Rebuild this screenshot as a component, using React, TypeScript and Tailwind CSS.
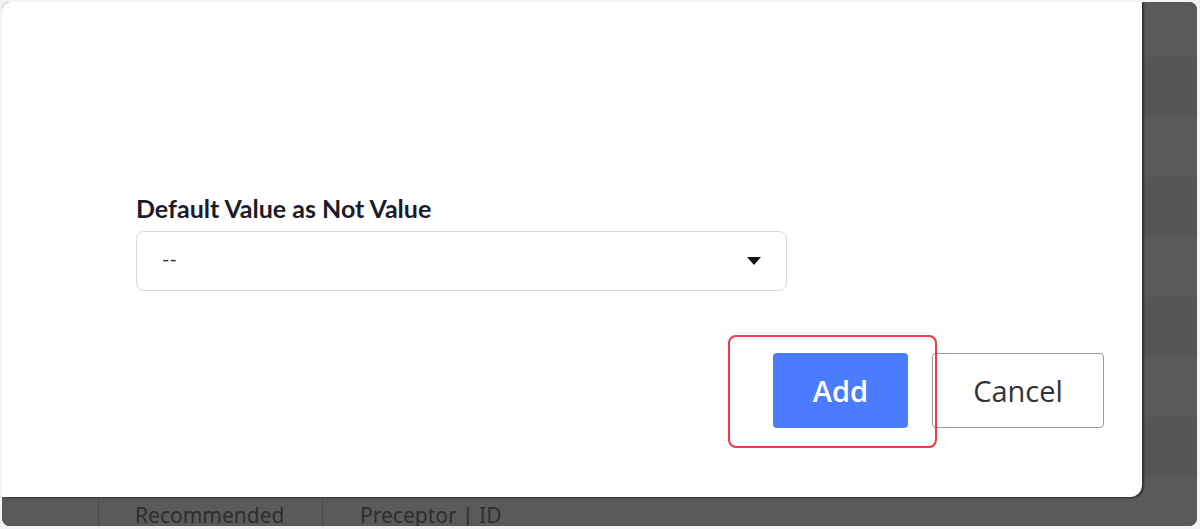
import React from "react";

export default function App() {
  const rows = Array.from({ length: 10 });
  return (
    <div className="w-[1200px] h-[529px] bg-[#f3f3f7] pl-[2px] pt-[2px] pr-[3px] pb-[3px]">
      <div className="relative w-full h-full rounded-[8px] bg-[#595959] overflow-hidden flex flex-col">
        <div className="absolute inset-0 flex flex-col -mt-[5px]">
          {rows.map((_, i) => (
            <div key={i} className={`h-[60px] shrink-0 ${i % 2 === 0 ? "bg-[#5a5a5a]" : "bg-[#565656]"}`} />
          ))}
        </div>
        <div className="relative flex h-[495px] shrink-0">
          <div
            className="relative w-[1140px] h-full bg-white rounded-br-[12px] shadow-[2px_1px_2px_rgba(0,0,0,0.45)] pl-[134px] pr-[38px] pt-[191px] flex flex-col"
            style={{ fontFamily: "Lato, 'Noto Sans', sans-serif" }}
          >
            <div className="text-[25px] leading-[30px] font-bold text-[#1b1b2b]">Default Value as Not Value</div>
            <div className="mt-[8px] w-[651px] h-[60px] border border-[#d9d9d9] rounded-[8px] flex items-center justify-between pl-[25px] pr-[25px]">
              <span className="text-[20px] text-[#333] leading-none -mt-[6px]">--</span>
              <svg width="14" height="8" viewBox="0 0 14 8">
                <path d="M0 0 L14 0 L7 8 Z" fill="#111" />
              </svg>
            </div>
            <div className="mt-[62px] flex justify-end gap-[24px]" style={{ fontFamily: "'Open Sans', Lato, sans-serif" }}>
              <div className="relative">
                <div className="absolute left-[-45px] top-[-18px] w-[209px] h-[113px] border-2 border-[#f0364a] rounded-[8px] pointer-events-none" />
                <button className="w-[135px] h-[75px] bg-[#4b7bff] rounded-[4px] text-white text-[29px] font-semibold flex items-center justify-center">
                  Add
                </button>
              </div>
              <button className="w-[172px] h-[75px] border border-[#9a9a9a] rounded-[4px] bg-white text-[#333] text-[29px] flex items-center justify-center">
                Cancel
              </button>
            </div>
          </div>
        </div>
        <div
          className="relative flex-1 flex text-[#2e2e2e] text-[21px] leading-none"
          style={{ fontFamily: "'Noto Sans', 'DejaVu Sans', sans-serif" }}
        >
          <div className="w-[97px] border-r border-[#4a4a4a]" />
          <div className="w-[224px] border-r border-[#4a4a4a] pl-[36px] pt-[8px]">Recommended</div>
          <div className="flex-1 pl-[37px] pt-[8px]">Preceptor | ID</div>
        </div>
      </div>
    </div>
  );
}
